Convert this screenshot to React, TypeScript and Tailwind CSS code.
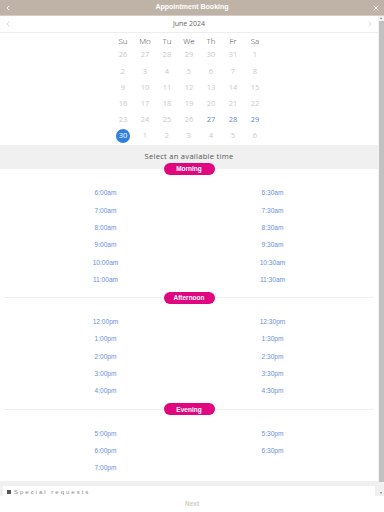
import { ChevronLeft, ChevronRight, X } from 'lucide-react'

const dayNames = ['Su', 'Mo', 'Tu', 'We', 'Th', 'Fr', 'Sa']

type Cell = { d: number; kind: 'off' | 'open' | 'sel' }

const weeks: Cell[][] = [
  [26, 27, 28, 29, 30, 31, 1].map(d => ({ d, kind: 'off' as const })),
  [2, 3, 4, 5, 6, 7, 8].map(d => ({ d, kind: 'off' as const })),
  [9, 10, 11, 12, 13, 14, 15].map(d => ({ d, kind: 'off' as const })),
  [16, 17, 18, 19, 20, 21, 22].map(d => ({ d, kind: 'off' as const })),
  [
    { d: 23, kind: 'off' },
    { d: 24, kind: 'off' },
    { d: 25, kind: 'off' },
    { d: 26, kind: 'off' },
    { d: 27, kind: 'open' },
    { d: 28, kind: 'open' },
    { d: 29, kind: 'open' },
  ],
  [
    { d: 30, kind: 'sel' },
    ...[1, 2, 3, 4, 5, 6].map(d => ({ d, kind: 'off' as const })),
  ],
]

const sections = [
  {
    label: 'Morning',
    divider: false,
    slots: ['6:00am', '6:30am', '7:00am', '7:30am', '8:00am', '8:30am', '9:00am', '9:30am', '10:00am', '10:30am', '11:00am', '11:30am'],
  },
  {
    label: 'Afternoon',
    divider: true,
    slots: ['12:00pm', '12:30pm', '1:00pm', '1:30pm', '2:00pm', '2:30pm', '3:00pm', '3:30pm', '4:00pm', '4:30pm'],
  },
  {
    label: 'Evening',
    divider: true,
    slots: ['5:00pm', '5:30pm', '6:00pm', '6:30pm', '7:00pm'],
  },
]

function Pill({ label, divider }: { label: string; divider: boolean }) {
  return (
    <div className="flex items-center px-[4px]">
      <div className={`flex-1 h-px ${divider ? 'bg-[#efefef]' : ''}`} />
      <div className="w-[51px] h-[12px] rounded-full bg-[#e0067f] flex items-center justify-center text-white font-bold text-[6.5px]">
        {label}
      </div>
      <div className={`flex-1 h-px ${divider ? 'bg-[#efefef]' : ''}`} />
    </div>
  )
}

export default function App() {
  return (
    <div className="w-[384px] h-[512px] flex flex-col bg-white overflow-hidden" style={{ fontFamily: '"Liberation Sans", Arial, sans-serif' }}>
      {/* header */}
      <div className="h-[16px] shrink-0 bg-[#bfb3a8] flex items-center justify-between px-[4px] text-white border-b border-[#d6ccc3]">
        <ChevronLeft size={8} strokeWidth={2.5} />
        <span className="text-[7px] font-bold">Appointment Booking</span>
        <X size={8} strokeWidth={2.5} />
      </div>

      <div className="flex flex-1 min-h-0">
        <div className="w-[378px] flex flex-col overflow-hidden">
          {/* month nav */}
          <div className="h-[17px] shrink-0 flex items-center justify-between px-[4px] border-b border-[#eeeeee] text-[#aaaaaa]" style={{ fontFamily: '"Open Sans", sans-serif' }}>
            <ChevronLeft size={8} strokeWidth={1.5} />
            <span className="text-[7px] text-[#666666]">June 2024</span>
            <ChevronRight size={8} strokeWidth={1.5} />
          </div>

          {/* calendar */}
          <div className="flex justify-center pt-[1px] pb-[1px]" style={{ fontFamily: '"Open Sans", sans-serif' }}>
            <div className="flex flex-col">
              <div className="grid grid-cols-7 h-[13px] items-center">
                {dayNames.map(n => (
                  <div key={n} className="w-[22px] text-center text-[8px] font-light text-[#444444]">{n}</div>
                ))}
              </div>
              {weeks.map((w, i) => (
                <div key={i} className="grid grid-cols-7 h-[16.2px] items-center">
                  {w.map((c, j) => (
                    <div key={j} className="w-[22px] flex justify-center">
                      {c.kind === 'sel' ? (
                        <span className="w-[14px] h-[14px] rounded-full bg-[#2f7fdf] text-white text-[7.5px] flex items-center justify-center">{c.d}</span>
                      ) : (
                        <span className={`text-[7.5px] ${c.kind === 'open' ? 'text-[#5a86d8]' : 'text-[#c9c9c9]'}`}>{c.d}</span>
                      )}
                    </div>
                  ))}
                </div>
              ))}
            </div>
          </div>

          {/* select band */}
          <div className="h-[24px] shrink-0 bg-[#f0f0f0] flex justify-center pt-[6px]" style={{ fontFamily: '"Open Sans", sans-serif' }}>
            <span className="text-[7.5px] tracking-[0.3px] text-[#555555]">Select an available time</span>
          </div>

          {/* time sections */}
          <div className="-mt-[6px] flex flex-col">
            {sections.map(s => (
              <div key={s.label} className="flex flex-col">
                <Pill label={s.label} divider={s.divider} />
                <div className="grid grid-cols-2 px-[22px] pt-[9.5px] pb-[3.5px]">
                  {s.slots.map(t => (
                    <div key={t} className="h-[17.3px] flex items-center justify-center text-[6.6px] text-[#6a8fe0]">{t}</div>
                  ))}
                </div>
              </div>
            ))}
          </div>

          {/* bottom card (clipped by the scroll area) */}
          <div className="mt-[1px] bg-[#f0f0f0] pt-[5px] px-[3px] shrink-0">
            <div className="bg-white h-[20px] flex items-start pt-[3px] pl-[4px] gap-[3px] text-[6px] leading-[7px] text-[#888888]">
              <span className="w-[4px] h-[4px] bg-[#555555] mt-[1px]" />
              <span className="tracking-[2px]">Special requests</span>
            </div>
          </div>
        </div>

        {/* scrollbar */}
        <div className="w-[6px] bg-[#f1f1f1] flex flex-col items-center">
          <div className="h-[5px] flex items-center text-[#777] text-[3px]">▲</div>
          <div className="w-[5px] flex-1 bg-[#c1c1c1] mb-[9px]" />
          <div className="h-[5px] flex items-center text-[#555] text-[3px]">▼</div>
        </div>
      </div>

      {/* footer */}
      <div className="h-[16px] shrink-0 flex items-center justify-center">
        <span className="text-[6.5px] font-bold text-[#d3ccc5]">Next</span>
      </div>
    </div>
  )
}
